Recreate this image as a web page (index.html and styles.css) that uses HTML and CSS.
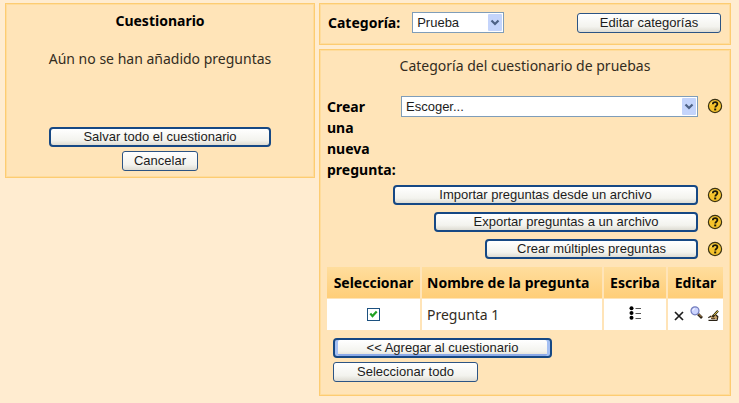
FILE: index.html
```html
<!DOCTYPE html>
<html lang="es">
<head>
<meta charset="utf-8">
<title>Cuestionario</title>
<link rel="stylesheet" href="styles.css">
</head>
<body>
<svg class="defs" aria-hidden="true">
  <symbol id="help" viewBox="0 0 16 16">
    <circle cx="8" cy="8" r="6.6" fill="#f6c32c" stroke="#3a3214" stroke-width="1.2"/>
    <path d="M3.6 6.5a4.5 4.5 0 0 1 4-3" fill="none" stroke="#ffe98a" stroke-width="1"/>
    <path d="M5.8 6.2c0-1.4 1-2.1 2.3-2.1s2.3.8 2.3 2c0 1.6-2.1 1.7-2.1 3.3" fill="none" stroke="#1c1808" stroke-width="1.8"/>
    <path d="M7.2 10.5h2v1.9h-2z" fill="#1c1808"/>
  </symbol>
  <symbol id="arrow" viewBox="0 0 14 17">
    <rect width="14" height="17" rx="1" fill="#c4d4fb"/>
    <path d="M3.5 6.5L7 10l3.5-3.5" fill="none" stroke="#4d6185" stroke-width="2.2"/>
  </symbol>
</svg>
<main class="page">
  <section class="box quiz">
    <h1 class="heading">Cuestionario</h1>
    <p class="message">Aún no se han añadido preguntas</p>
    <div class="quiz-actions">
      <button type="button" class="btn strong save">Salvar todo el cuestionario</button>
      <button type="button" class="btn cancel">Cancelar</button>
    </div>
  </section>
  <div class="side">
    <section class="box category">
      <label class="label" for="category">Categoría:</label>
      <span class="picker short">
        <select id="category"><option>Prueba</option></select>
        <svg class="arrow" aria-hidden="true"><use href="#arrow"/></svg>
      </span>
      <button type="button" class="btn edit">Editar categorías</button>
    </section>
    <section class="box bank">
      <p class="title">Categoría del cuestionario de pruebas</p>
      <div class="create">
        <label class="label create-label" for="create">Crear<br>una<br>nueva<br>pregunta:</label>
        <span class="picker wide">
          <select id="create"><option>Escoger...</option></select>
          <svg class="arrow" aria-hidden="true"><use href="#arrow"/></svg>
        </span>
        <a class="help" href="#" aria-label="Ayuda"><svg class="help-icon"><use href="#help"/></svg></a>
      </div>
      <div class="tools">
        <div class="tool">
          <button type="button" class="btn strong import">Importar preguntas desde un archivo</button>
          <a class="help" href="#" aria-label="Ayuda"><svg class="help-icon"><use href="#help"/></svg></a>
        </div>
        <div class="tool">
          <button type="button" class="btn strong export">Exportar preguntas a un archivo</button>
          <a class="help" href="#" aria-label="Ayuda"><svg class="help-icon"><use href="#help"/></svg></a>
        </div>
        <div class="tool">
          <button type="button" class="btn strong multiple">Crear múltiples preguntas</button>
          <a class="help" href="#" aria-label="Ayuda"><svg class="help-icon"><use href="#help"/></svg></a>
        </div>
      </div>
      <table class="questions">
        <colgroup><col class="c-select"><col><col class="c-type"><col class="c-edit"></colgroup>
        <thead>
          <tr><th scope="col">Seleccionar</th><th scope="col" class="name">Nombre de la pregunta</th><th scope="col">Escriba</th><th scope="col">Editar</th></tr>
        </thead>
        <tbody>
          <tr>
            <td>
              <label class="check">
                <input type="checkbox" checked aria-label="Seleccionar Pregunta 1">
                <svg class="tick" viewBox="0 0 13 13" aria-hidden="true"><path d="M3.3 5.5l2.2 2.6 4.2-4.6" fill="none" stroke="#21a121" stroke-width="2.2"/></svg>
              </label>
            </td>
            <td class="name">Pregunta 1</td>
            <td>
              <svg class="type-icon" viewBox="0 0 12 14" aria-hidden="true">
                <g fill="#000"><circle cx="2.5" cy="2.3" r="2"/><circle cx="2.5" cy="7" r="2"/><circle cx="2.5" cy="11.7" r="2"/></g>
                <path d="M6.5 2.5H12M6.5 7.5H12M6.5 12.5H12" stroke="#555" stroke-width="1"/>
              </svg>
            </td>
            <td>
              <div class="icons">
                <a class="icon cross" href="#" aria-label="Borrar"><svg viewBox="0 0 10 10"><path d="M1 1l8 8M9 1L1 9" stroke="#1c1c1c" stroke-width="1.7"/></svg></a>
                <a class="icon zoom" href="#" aria-label="Vista previa"><svg viewBox="0 0 13 13"><path d="M8 8l4 4" stroke="#2c2418" stroke-width="2.6"/><path d="M8.3 7.8l3 3" stroke="#d39a50" stroke-width="1"/><circle cx="5" cy="4.8" r="4" fill="#ccd4ff" stroke="#737dbd" stroke-width="1.2"/><path d="M2.8 4.7a2.2 2.2 0 0 1 2-2" fill="none" stroke="#fff"/></svg></a>
                <a class="icon write" href="#" aria-label="Editar"><svg viewBox="0 0 11 11"><path d="M2 7l3-2.5 4.5 1L9 9 4.5 9.6z" fill="#c9a36a"/><path d="M.3 7.8L3.2 6M.5 10.3h9M8 5l1.8 1.8L9.2 10" fill="none" stroke="#2a2216" stroke-width="1.2"/><path d="M3 8.6h4" stroke="#5c4526" stroke-width="1"/><path d="M10 .8L4.4 7" stroke="#2c2713" stroke-width="2.2"/><path d="M9.8 1.1L6 5.2" stroke="#e0c545" stroke-width="1"/></svg></a>
              </div>
            </td>
          </tr>
        </tbody>
      </table>
      <div class="bank-actions">
        <button type="button" class="btn strong focus add">&lt;&lt; Agregar al cuestionario</button>
        <button type="button" class="btn all">Seleccionar todo</button>
      </div>
    </section>
  </div>
</main>
</body>
</html>
```
FILE: styles.css
```css
* { box-sizing: border-box; }

body {
  margin: 0;
  background: #ffecd0;
  color: #332c1e;
  font: 14px/21px "Noto Sans", "Open Sans", sans-serif;
}

.defs { position: absolute; width: 0; height: 0; }

.page {
  display: grid;
  grid-template-columns: 310fr 412fr;
  align-items: start;
  gap: 4px;
  padding: 3px 8px 6px 5px;
}

.side { display: grid; gap: 4px; }

.box {
  background: #ffe4b8;
  border: 1px solid #fdcc72;
  box-shadow: inset 0 0 0 1px #ffdc9c;
}

.quiz { padding: 6px 8px; text-align: center; }

.heading, .label, th {
  margin: 0;
  color: #000;
  font-size: 14px;
  font-weight: 700;
}

.message { margin: 17px 0 58px; }

.quiz-actions {
  display: flex;
  flex-direction: column;
  align-items: center;
  gap: 4px;
}

.btn {
  height: 20px;
  padding: 0 4px;
  border: 1px solid #2c5484;
  border-radius: 3px;
  background: linear-gradient(#fff, #f3f3ee 70%, #dedcd3);
  color: #1c1c1c;
  font: 13px/16px "Liberation Sans", Arial, sans-serif;
  white-space: nowrap;
}

.strong { border: 2px solid #164884; border-radius: 4px; }
.focus { box-shadow: inset 3px 0 #a5c0f3, inset -3px 0 #a5c0f3, inset 0 -2px #8caae8; }

.save { width: 222px; }
.cancel { width: 76px; }
.edit { width: 144px; margin-left: auto; }
.import { width: 305px; }
.export { width: 264px; }
.multiple { width: 213px; }
.add { width: 219px; }
.all { width: 145px; }

.category {
  display: flex;
  align-items: center;
  padding: 8px 9px 11px 8px;
}

.picker { position: relative; display: block; }
.short { width: 92px; margin-left: 12px; }
.wide { flex: 1; }

.picker select {
  display: block;
  width: 100%;
  height: 21px;
  padding: 0 20px 0 4px;
  border: 1px solid #7f9db9;
  border-radius: 0;
  appearance: none;
  background: #fff;
  color: #1c1c1c;
  font: 13px/19px "Liberation Sans", Arial, sans-serif;
}

.arrow {
  position: absolute;
  top: 2px;
  right: 2px;
  width: 14px;
  height: 17px;
  pointer-events: none;
}

.bank { padding: 5px 7px 13px; }
.title { margin: 0 0 20px; text-align: center; }

.create { display: flex; align-items: flex-start; }
.create-label { width: 74px; }

.help { display: block; height: 16px; margin-left: 9px; }
.create .help { margin-top: 2px; }
.help-icon { display: block; width: 16px; height: 16px; }

.tools { display: grid; gap: 7px; margin-top: 5px; }
.tool { display: flex; justify-content: flex-end; align-items: center; }

.questions {
  width: 100%;
  margin-top: 8px;
  border-collapse: separate;
  border-spacing: 0;
  table-layout: fixed;
}

.c-select { width: 95px; }
.c-type { width: 64px; }
.c-edit { width: 55px; }

th, td {
  height: 31px;
  padding: 0;
  border-right: 2px solid #ffe4b8;
  text-align: center;
  vertical-align: middle;
  white-space: nowrap;
}

th:last-child, td:last-child { border-right: 0; }
th { height: 32px; border-bottom: 1px solid #ffe4b8; background: linear-gradient(#ffdd9d, #ffce78); background-clip: padding-box; }
td { background: #fff; background-clip: padding-box; }
.name { padding-left: 5px; text-align: left; }

.check { position: relative; display: block; width: 13px; height: 13px; margin: 0 auto; }
.check input {
  display: block;
  width: 13px;
  height: 13px;
  margin: 0;
  border: 1px solid #1c5180;
  appearance: none;
  background: #fff;
}
.tick { position: absolute; inset: 0; opacity: 0; pointer-events: none; }
.check input:checked + .tick { opacity: 1; }

.type-icon { display: block; width: 12px; height: 14px; margin: 0 auto 4px; }

.icons { display: flex; align-items: flex-end; justify-content: space-between; padding: 0 4px 2px 6px; }
.icon, .icon svg { display: block; }
.cross svg { width: 10px; height: 10px; }
.zoom { padding-bottom: 2px; }
.zoom svg { width: 13px; height: 13px; }
.write svg { width: 11px; height: 11px; }

.bank-actions {
  display: flex;
  flex-direction: column;
  align-items: flex-start;
  gap: 4px;
  padding: 8px 0 0 6px;
}
```
